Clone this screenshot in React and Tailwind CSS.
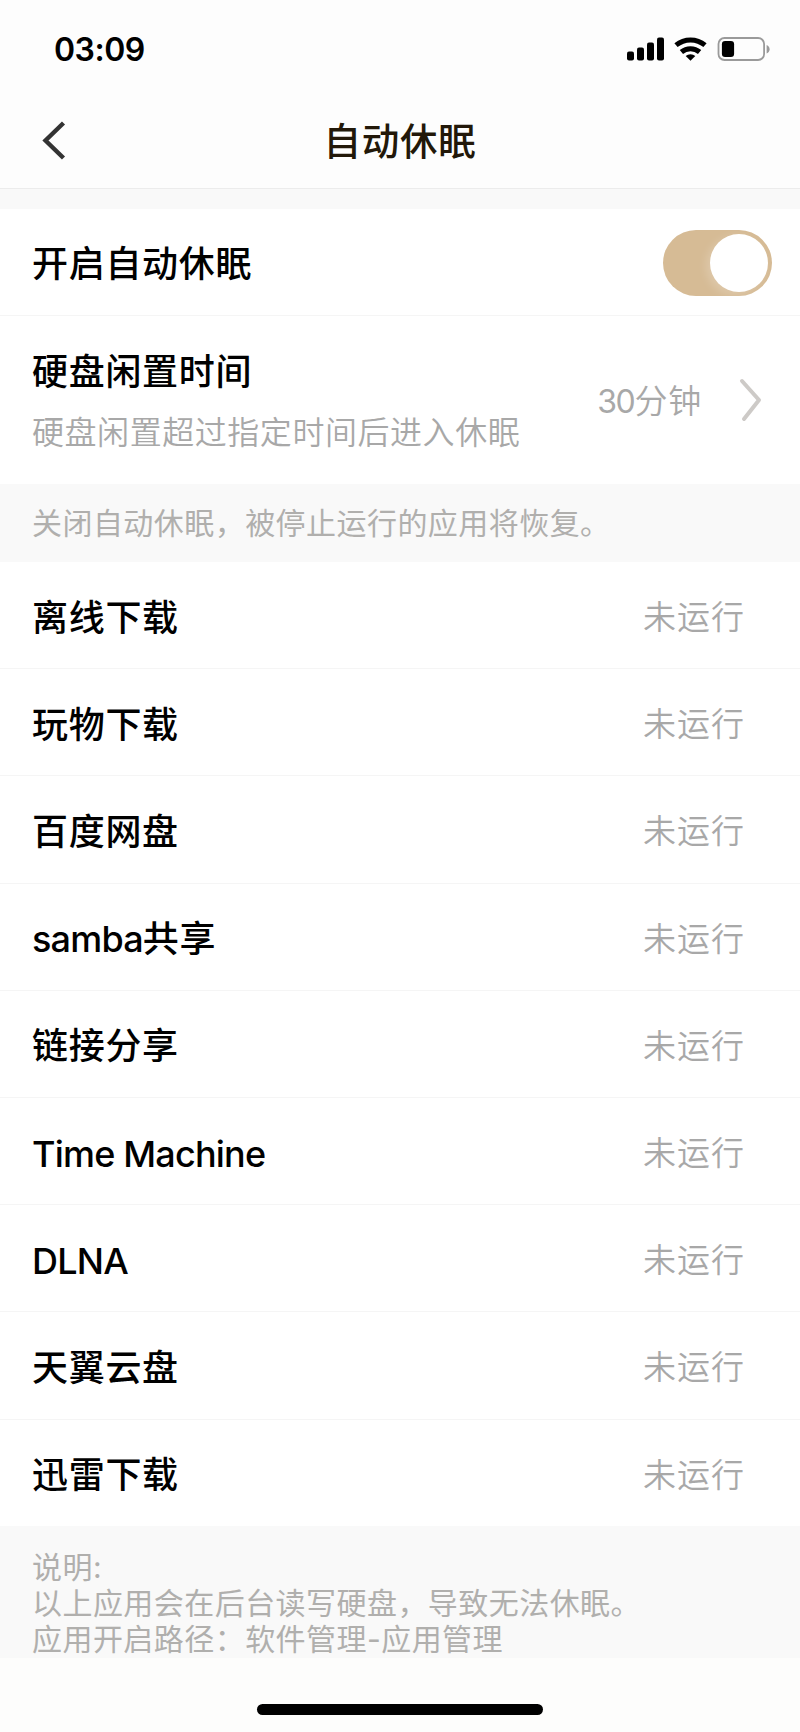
import React, { useState } from 'react';

const apps = [
  { name: '离线下载', status: '未运行' },
  { name: '玩物下载', status: '未运行' },
  { name: '百度网盘', status: '未运行' },
  { name: 'samba', suffix: '共享', status: '未运行' },
  { name: '链接分享', status: '未运行' },
  { name: 'Time Machine', latin: true, status: '未运行' },
  { name: 'DLNA', latin: true, status: '未运行' },
  { name: '天翼云盘', status: '未运行' },
  { name: '迅雷下载', status: '未运行' },
];

const StatusBar = () => (
  <div className="flex h-[98px] items-center justify-between pl-[54px] pr-[30px]">
    <span className="pt-0.5 text-[32px] font-semibold leading-none tracking-[-0.5px] text-black">03:09</span>
    <svg width="144" height="26" viewBox="0 0 144 26">
      <rect x="1" y="15.5" width="7" height="9" rx="2" />
      <rect x="11" y="11.5" width="7" height="13" rx="2" />
      <rect x="21" y="6.5" width="7" height="18" rx="2" />
      <rect x="31" y="1.5" width="7" height="23" rx="2" />
      <g fill="none" stroke="#000" strokeWidth="5">
        <path d="M50 9.2a22.5 22.5 0 0 1 29 0" />
        <path d="M55.4 16a14 14 0 0 1 18.2 0" />
      </g>
      <path d="M64.5 24.800l-4.8-4.7a7 7 0 0 1 9.6 0z" />
      <rect x="92.5" y="2" width="45.6" height="22" rx="6" fill="none" stroke="#9a9a9a" strokeWidth="1.8" />
      <rect x="95.9" y="5" width="12.2" height="16" rx="3.2" />
      <path d="M140.6 9c4 1.600 4 6.800 0 8.400z" fill="#9a9a9a" />
    </svg>
  </div>
);

const Header = ({ title }) => (
  <header className="h-[189px] border-b border-[#ececec] bg-[#fdfdfd]">
    <StatusBar />
    <div className="grid h-[84px] grid-cols-[100px_1fr_100px] items-center">
      <button type="button" aria-label="返回" className="pl-[42px]">
        <svg width="24" height="40" viewBox="0 0 24 40" fill="none" stroke="#333" strokeWidth="4.4">
          <path d="M21.500 3L3.500 20.500L21.500 38" />
        </svg>
      </button>
      <h1 className="pt-[3px] text-center text-[37.500px] font-medium leading-none tracking-[0.8px] text-[#221809]">{title}</h1>
    </div>
  </header>
);

const Toggle = ({ checked, onChange }) => (
  <button
    type="button"
    role="switch"
    aria-checked={checked}
    onClick={() => onChange(!checked)}
    className={`mt-0.5 flex h-[66px] w-[109px] items-center rounded-full p-1 ${checked ? 'justify-end bg-[#d6bb95]' : 'justify-start bg-[#e5e5e5]'}`}
  >
    <span className="size-[58px] rounded-full bg-white shadow-[-4px_3px_10px_rgba(255,255,255,0.2)]" />
  </button>
);

const AppRow = ({ app }) => (
  <li className="flex h-[107.200px] items-center justify-between border-b border-[#f5f5f5] pl-8 pr-[55px] pt-[5px] last:h-[106px] last:border-b-0">
    <span className="flex text-[36px] font-medium leading-none text-black">
      <span className={app.latin || app.suffix ? 'tracking-[-0.8px]' : 'tracking-[0.7px]'}>{app.name}</span>
      {app.suffix && <span className="tracking-[0.7px]">{app.suffix}</span>}
    </span>
    <span className="text-[33px] font-[350] leading-none tracking-[1px] text-[#a8a8a8]">{app.status}</span>
  </li>
);

const App = () => {
  const [enabled, setEnabled] = useState(true);

  return (
    <div className="flex h-[1732px] w-[800px] flex-col bg-[#f9f9f9] font-['Inter','Noto_Sans_CJK_SC',sans-serif]">
      <Header title="自动休眠" />

      <section className="mt-5 bg-white">
        <div className="flex h-[107px] items-center justify-between border-b border-[#f5f5f5] pl-8 pr-7">
          <span className="pt-1 text-[36px] font-medium leading-none tracking-[0.7px] text-black">开启自动休眠</span>
          <Toggle checked={enabled} onChange={setEnabled} />
        </div>
        <div className="flex h-[168px] items-center justify-between pl-8 pr-[38px]">
          <div className="flex flex-col gap-[27px] pt-[3px]">
            <span className="text-[36px] font-medium leading-none tracking-[0.7px] text-black">硬盘闲置时间</span>
            <span className="text-[32px] font-[350] leading-none tracking-[0.550px] text-[#a8a8a8]">硬盘闲置超过指定时间后进入休眠</span>
          </div>
          <div className="flex items-center gap-[37px]">
            <span className="flex items-baseline pt-[3px] text-[#a8a8a8]">
              <span className="text-[32px] leading-none tracking-[-1.400px]">30</span>
              <span className="text-[33px] font-[350] leading-none tracking-[0.8px]">分钟</span>
            </span>
            <svg width="23" height="44" viewBox="0 0 23 44" fill="none" stroke="#cdcac7" strokeWidth="4" strokeLinecap="round" strokeLinejoin="round">
              <path d="M3 3L20 22L5 41" />
            </svg>
          </div>
        </div>
      </section>

      <p className="flex h-[78px] items-center pl-8 text-[30px] leading-none tracking-[0.450px] text-[#b0afad]">
        关闭自动休眠，被停止运行的应用将恢复。
      </p>

      <ul className="bg-white">
        {apps.map((app) => (
          <AppRow key={app.name} app={app} />
        ))}
      </ul>

      <div className="h-[132px] pl-8 pt-[23px] text-[30px] leading-[36px] tracking-[0.450px] text-[#b0afad]">
        <p>说明:</p>
        <p>以上应用会在后台读写硬盘，导致无法休眠。</p>
        <p>应用开启路径：软件管理-应用管理</p>
      </div>

      <footer className="flex flex-1 justify-center bg-[#fdfdfc] pt-[46px]">
        <div className="h-[11px] w-[286px] rounded-full bg-black" />
      </footer>
    </div>
  );
};

export default App;
